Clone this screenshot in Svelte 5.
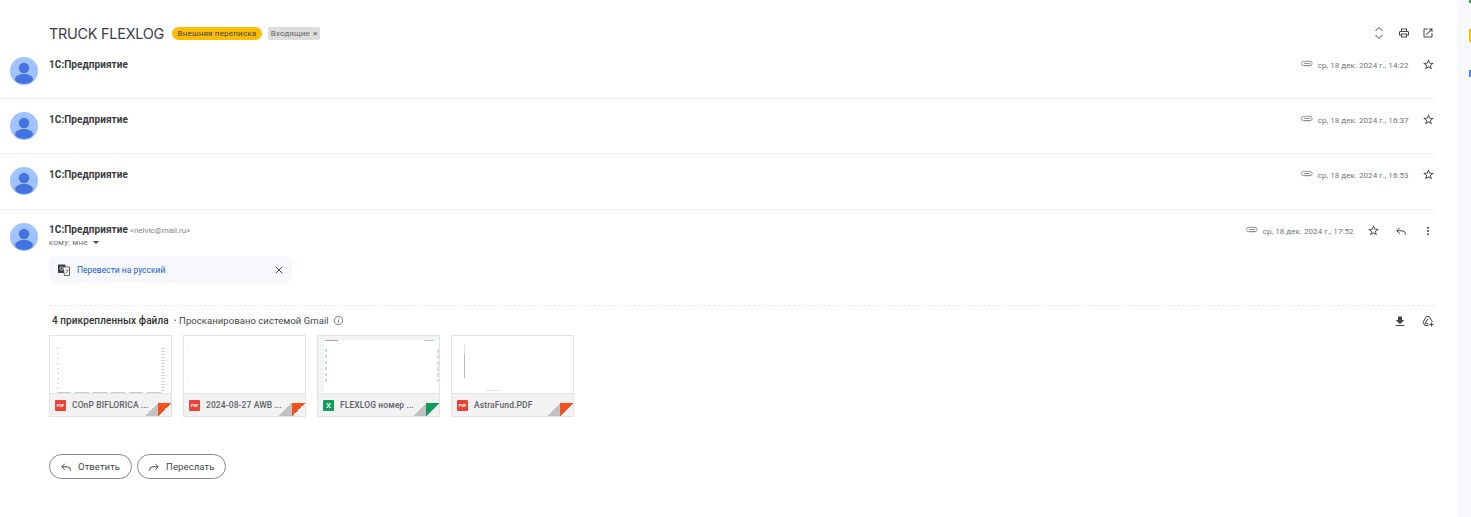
<script>
  const collapsed = [
    { time: 'ср, 18 дек. 2024 г., 14:22' },
    { time: 'ср, 18 дек. 2024 г., 16:37' },
    { time: 'ср, 18 дек. 2024 г., 16:53' }
  ];

  const files = [
    { name: 'COnP BIFLORICA ...', type: 'pdf', preview: 'a' },
    { name: '2024-08-27 AWB ...', type: 'pdf', preview: 'b' },
    { name: 'FLEXLOG номер ...', type: 'xls', preview: 'c' },
    { name: 'AstraFund.PDF', type: 'pdf', preview: 'd' }
  ];
</script>

{#snippet avatar()}
  <svg class="avatar" viewBox="0 0 28 28">
    <circle cx="14" cy="14" r="14" fill="#a0c3ff" />
    <circle cx="14" cy="11" r="5.2" fill="#4374e0" />
    <ellipse cx="14" cy="22" rx="9" ry="5" fill="#4374e0" />
  </svg>
{/snippet}

{#snippet clip()}
  <svg class="clip" viewBox="0 0 14 8" fill="none" stroke="#80868b" stroke-width="1">
    <path d="M4 6.5h6.5a2.5 2.5 0 0 0 0-5H3a2.5 2.5 0 0 0 0 5h8" />
    <path d="M3.5 4h7" />
  </svg>
{/snippet}

{#snippet star()}
  <svg class="ico star" viewBox="0 0 24 24" fill="#444746">
    <path d="M22 9.24l-7.19-.62L12 2 9.19 8.63 2 9.24l5.46 4.73L5.82 21 12 17.27 18.18 21l-1.63-7.03L22 9.24zM12 15.4l-3.76 2.27 1-4.28-3.32-2.88 4.38-.38L12 6.1l1.71 4.04 4.38.38-3.32 2.88 1 4.28L12 15.4z" />
  </svg>
{/snippet}

{#snippet reply()}
  <svg class="ico" viewBox="0 0 24 24" fill="none" stroke="#444746" stroke-width="2">
    <path d="M9.500 5.500L3.500 11.500l6 6" />
    <path d="M4 11.500h10a7 7 0 0 1 7 7v1" />
  </svg>
{/snippet}

{#snippet forward()}
  <svg class="ico" viewBox="0 0 24 24" fill="none" stroke="#444746" stroke-width="2">
    <path d="M14.500 5.500l6 6-6 6" />
    <path d="M20 11.500H10a7 7 0 0 0-7 7v1" />
  </svg>
{/snippet}

<div class="page">
  <main class="thread">
    <header class="subject">
      <h1>TRUCK FLEXLOG</h1>
      <span class="tag-yellow">Внешняя переписка</span>
      <span class="tag-gray">Входящие <span class="tag-x">×</span></span>
      <div class="subject-tools">
        <svg class="ico" viewBox="0 0 24 24" fill="none" stroke="#444746" stroke-width="2">
          <path d="M5 8l7-7 7 7" /><path d="M5 16l7 7 7-7" />
        </svg>
        <svg class="ico" viewBox="0 0 24 24" fill="#444746">
          <path d="M19 8h-1V3H6v5H5c-1.660 0-3 1.340-3 3v6h4v4h12v-4h4v-6c0-1.660-1.340-3-3-3zM8 5h8v3H8V5zm8 12v2H8v-4h8v2zm2-2v-2H6v2H4v-4c0-.55.45-1 1-1h14c.55 0 1 .45 1 1v4h-2z" />
        </svg>
        <svg class="ico" viewBox="0 0 24 24" fill="#444746">
          <path d="M19 19H5V5h7V3H5c-1.110 0-2 .9-2 2v14c0 1.100.89 2 2 2h14c1.100 0 2-.9 2-2v-7h-2v7zM14 3v2h3.590l-9.830 9.830 1.410 1.410L19 6.410V10h2V3h-7z" />
        </svg>
      </div>
    </header>

    {#each collapsed as msg}
      <section class="row">
        {@render avatar()}
        <div class="sender">1С:Предприятие</div>
        <div class="meta">
          {@render clip()}
          <span class="time">{msg.time}</span>
          {@render star()}
        </div>
      </section>
    {/each}

    <section class="open">
      <div class="open-head">
        {@render avatar()}
        <div class="who">
          <div class="who-line"><span class="sender">1С:Предприятие</span> <span class="email">&lt;nelvic@mail.ru&gt;</span></div>
          <div class="to">кому: мне <span class="caret"></span></div>
        </div>
        <div class="meta open-meta">
          {@render clip()}
          <span class="time">ср, 18 дек. 2024 г., 17:52</span>
          {@render star()}
          {@render reply()}
          <svg class="ico" viewBox="0 0 24 24" fill="#444746">
            <circle cx="12" cy="5.500" r="2" /><circle cx="12" cy="12" r="2" /><circle cx="12" cy="18.500" r="2" />
          </svg>
        </div>
      </div>

      <div class="translate">
        <svg class="trans-ico" viewBox="0 0 12 12">
          <rect x="0" y="0.500" width="7.500" height="8.500" rx="0.500" fill="#3c4043" />
          <path d="M5 3h6.500v8.500H6.500z" fill="#fff" stroke="#3c4043" stroke-width="0.800" />
          <path d="M7.500 6h3M8 9.500l2-3" stroke="#3c4043" stroke-width="0.700" fill="none" />
          <circle cx="3.600" cy="4.500" r="1.600" fill="none" stroke="#fff" stroke-width="0.700" />
        </svg>
        <a href="#top" class="trans-link">Перевести на русский</a>
        <svg class="trans-x" viewBox="0 0 10 10" fill="none" stroke="#444746" stroke-width="1.200">
          <path d="M1 1l8 8M9 1l-8 8" />
        </svg>
      </div>

      <div class="attachments">
        <div class="att-head">
          <strong>4 прикрепленных файла</strong>
          <span class="dot">•</span>
          <span class="scanned">Просканировано системой Gmail</span>
          <svg class="info" viewBox="0 0 12 12" fill="none" stroke="#5f6368" stroke-width="0.900">
            <circle cx="6" cy="6" r="4.500" /><path d="M6 5.500v3M6 3.500v1" />
          </svg>
          <div class="att-tools">
            <svg class="ico" viewBox="0 0 24 24" fill="#444746">
              <path d="M8 3h8v7h4.500L12 18.500 3.500 10H8z" /><path d="M3.500 20h17v2h-17z" />
            </svg>
            <svg class="ico" viewBox="0 0 24 24" fill="none" stroke="#444746" stroke-width="2">
              <path d="M8.500 3h6l6.500 11" /><path d="M8.500 3L2 14.500 5.500 21H13" /><path d="M11.500 8L6 17.500h7" />
              <path d="M19 15v8M15 19h8" />
            </svg>
          </div>
        </div>

        <div class="files">
          {#each files as f}
            <div class="file">
              <div class="thumb">
                {#if f.preview === 'a'}
                  <i class="ln v1"></i><i class="ln v2"></i><i class="ln h1"></i>
                {:else if f.preview === 'b'}
                  <i class="ln h2"></i><i class="ln h2b"></i><i class="ln v3"></i>
                {:else if f.preview === 'c'}
                  <i class="ln s1"></i><i class="ln s2"></i><i class="ln s3"></i><i class="ln s3b"></i><i class="ln s4"></i><i class="ln s5"></i>
                {:else}
                  <i class="ln v4"></i><i class="ln h3"></i>
                {/if}
              </div>
              <div class="foot">
                {#if f.type === 'pdf'}
                  <span class="badge pdf">PDF</span>
                {:else}
                  <span class="badge xls">X</span>
                {/if}
                <span class="fname">{f.name}</span>
                <span class="fold"></span>
                <span class="corner {f.type}"></span>
              </div>
            </div>
          {/each}
        </div>
      </div>

      <div class="actions">
        <button>{@render reply()}Ответить</button>
        <button>{@render forward()}Переслать</button>
      </div>
    </section>
  </main>

  <aside class="side">
    <i class="mark green"></i>
    <i class="mark yellow"></i>
    <i class="mark blue"></i>
  </aside>
</div>

<style>
  :global(body) {
    margin: 0;
    background: #fff;
  }

  .page {
    display: flex;
    height: 517px;
    overflow: hidden;
    font-family: Roboto, "Liberation Sans", sans-serif;
    color: #202124;
  }

  .thread {
    width: 1457px;
    flex: none;
  }

  .side {
    flex: 1;
    background: #f6f8fc;
    position: relative;
  }

  .mark {
    position: absolute;
    right: 0;
    width: 2px;
  }
  .mark.green { top: 0; height: 3px; background: #34a853; }
  .mark.yellow { top: 29px; height: 13px; background: #fbbc04; }
  .mark.blue { top: 70px; height: 7px; background: #4285f4; }

  .subject {
    height: 44px;
    box-sizing: border-box;
    padding: 24px 23px 0 49px;
    display: flex;
    align-items: flex-start;
    gap: 6px;
  }

  h1 {
    margin: 0 2px 0 0;
    font-family: Inter, sans-serif;
    font-size: 14.500px;
    font-weight: 400;
    line-height: 19px;
    color: #3c4043;
    letter-spacing: -0.300px;
  }

  .tag-yellow {
    margin-top: 3px;
    height: 13px;
    line-height: 13px;
    padding: 0 5.500px;
    border-radius: 7px;
    background: #fbbc04;
    font-size: 8px;
    color: #444;
    letter-spacing: 0.200px;
  }

  .tag-gray {
    margin-top: 3px;
    height: 13px;
    line-height: 13px;
    padding: 0 3px;
    border-radius: 2px;
    background: #dddddd;
    font-size: 8px;
    color: #666;
    letter-spacing: 0.150px;
  }

  .tag-x {
    margin-left: 1px;
    color: #555;
  }

  .subject-tools {
    margin-left: auto;
    margin-top: 3px;
    display: flex;
    gap: 12.500px;
  }

  .ico {
    width: 12px;
    height: 12px;
    flex: none;
    display: block;
  }

  .ico.star {
    width: 13px;
    height: 13px;
  }

  .row {
    height: 55px;
    box-sizing: border-box;
    margin-right: 22px;
    padding: 13px 0 0 10px;
    display: flex;
    align-items: flex-start;
    border-bottom: 1px solid #eceff1;
  }

  .row:nth-of-type(3) {
    height: 56px;
  }

  .row .sender {
    margin-left: 11px;
    margin-top: 2px;
  }

  .avatar {
    width: 28px;
    height: 28px;
    flex: none;
    display: block;
  }

  .sender {
    font-size: 10px;
    font-weight: 700;
    line-height: 12px;
    color: #3a3b3e;
    letter-spacing: 0.050px;
  }

  .meta {
    margin-left: auto;
    display: flex;
    align-items: center;
    margin-top: 1px;
  }

  .clip {
    width: 12px;
    height: 7px;
    margin: -3px 5px 0 0;
    flex: none;
  }

  .time {
    font-size: 8.100px;
    color: #6f7478;
    line-height: 12px;
    margin-right: 13.500px;
  }

  .open {
    padding-top: 13px;
  }

  .open-head {
    display: flex;
    margin-right: 22px;
    padding-left: 10px;
    align-items: flex-start;
  }

  .who {
    margin-left: 11px;
    padding-top: 1px;
  }

  .who-line {
    display: flex;
    align-items: baseline;
    gap: 2px;
    line-height: 12px;
  }

  .email {
    font-size: 8px;
    color: #80868b;
  }

  .to {
    font-size: 8px;
    color: #6f7478;
    line-height: 12px;
    letter-spacing: 0.150px;
  }

  .caret {
    display: inline-block;
    margin: 0 0 1px 3px;
    border: 3px solid transparent;
    border-top-color: #444746;
    border-bottom-width: 0;
  }

  .open-meta {
    padding-right: 1px;
  }
  .open-meta .ico + .ico {
    margin-left: 15px;
  }

  .translate {
    margin: 5px 0 0 49px;
    width: 243px;
    height: 27px;
    box-sizing: border-box;
    background: #f6f8fc;
    border-radius: 6px;
    display: flex;
    align-items: center;
    padding: 0 9px;
  }

  .trans-ico {
    width: 12px;
    height: 12px;
    flex: none;
  }

  .trans-link {
    margin-left: 7px;
    font-size: 8.500px;
    color: #1a5fd0;
    text-decoration: none;
  }

  .trans-x {
    width: 8px;
    height: 8px;
    margin-left: auto;
  }

  .attachments {
    margin: 22px 22px 0 49px;
    border-top: 1px dashed #e8eaed;
    padding-top: 8px;
  }

  .att-head {
    display: flex;
    align-items: center;
    height: 13px;
    padding-left: 3px;
    font-size: 9.500px;
    color: #444746;
    gap: 3px;
  }

  .att-head strong {
    font-weight: 500;
    font-size: 10px;
    letter-spacing: 0.080px;
    color: #303134;
    margin-right: 2px;
  }

  .scanned {
    letter-spacing: 0.060px;
  }

  .dot {
    font-size: 7px;
  }

  .info {
    width: 11px;
    height: 11px;
    margin-left: 1px;
  }

  .att-tools {
    margin-left: auto;
    padding-right: 1px;
    display: flex;
    gap: 16px;
  }

  .files {
    display: flex;
    gap: 11px;
    margin-top: 8px;
  }

  .file {
    width: 123px;
    height: 82px;
    box-sizing: border-box;
    border: 1px solid #e3e3e3;
    display: flex;
    flex-direction: column;
    background: #fff;
  }

  .thumb {
    flex: 1;
    position: relative;
    overflow: hidden;
  }

  .ln {
    position: absolute;
    display: block;
  }

  .v1 { left: 7px; top: 12px; width: 2px; height: 45px; background: repeating-linear-gradient(#d5d7da 0 1px, #fff 1px 5px); }
  .v2 { right: 6px; top: 12px; width: 4px; height: 45px; background: repeating-linear-gradient(#d2d4d7 0 1px, #fff 1px 3px); }
  .h1 { left: 7px; right: 6px; top: 56px; height: 1px; background: repeating-linear-gradient(90deg, #c9ccd0 0 14px, #fff 14px 18px); }
  .h2 { left: 3px; width: 8px; top: 57px; height: 1px; background: #c9ccd0; }
  .h2b { left: 38px; width: 26px; top: 57px; height: 1px; background: #d5d7da; }
  .v3 { left: 3px; top: 9px; width: 1px; height: 35px; background: repeating-linear-gradient(#eceff1 0 4px, #fff 4px 32px); }
  .s1 { left: 0; right: 0; top: 0; height: 4px; background: #f3f4f4; }
  .s2 { left: 0; top: 0; width: 6px; height: 56px; background: repeating-linear-gradient(#f0f1f1 0 3px, #fafafa 3px 4px); }
  .s3 { left: 7px; top: 4px; width: 13px; height: 1px; background: #a5a8ab; }
  .s3b { right: 5px; top: 4px; width: 10px; height: 1px; background: #c5c8ca; }
  .s4 { left: 7px; top: 13px; width: 2px; height: 33px; background: repeating-linear-gradient(#c4e0c4 0 3px, #fff 3px 6px); }
  .s5 { right: 0; top: 13px; width: 2px; height: 33px; background: repeating-linear-gradient(#cfe8cf 0 4px, #fff 4px 6px); }
  .v4 { left: 12px; top: 8px; width: 1px; height: 34px; background: linear-gradient(#dfe1e3 0 30%, #b6babd 30%); }
  .h3 { left: 34px; width: 13px; top: 54px; height: 1px; background: #dfe1e3; }

  .foot {
    height: 22px;
    flex: none;
    background: #f2f2f2;
    border-top: 1px solid #e3e3e3;
    display: flex;
    align-items: center;
    padding-left: 5px;
    position: relative;
  }

  .badge {
    width: 11px;
    height: 11px;
    border-radius: 1px;
    flex: none;
    color: #fff;
    text-align: center;
    line-height: 11px;
  }

  .badge.pdf {
    background: #ea4335;
    font-size: 4px;
    font-weight: 700;
  }

  .badge.xls {
    background: #0f9d58;
    font-size: 8px;
    font-weight: 500;
  }

  .fname {
    margin-left: 6px;
    font-size: 8.500px;
    font-weight: 500;
    color: #5f6368;
    letter-spacing: 0.100px;
    white-space: nowrap;
  }

  .fold {
    position: absolute;
    right: 13px;
    bottom: 0;
    width: 13px;
    height: 13px;
    background: linear-gradient(135deg, transparent 50%, #c1c1c1 50%);
  }

  .corner {
    position: absolute;
    right: 0;
    bottom: 0;
    width: 13px;
    height: 13px;
  }
  .corner.pdf { background: linear-gradient(135deg, #f4511e 50%, transparent 50%); }
  .corner.xls { background: linear-gradient(135deg, #0f9d58 50%, transparent 50%); }

  .actions {
    display: flex;
    gap: 5px;
    margin: 37px 0 0 49px;
  }

  button {
    height: 25px;
    box-sizing: border-box;
    background: #fff;
    border: 1px solid #858886;
    border-radius: 13px;
    padding: 0 11px 0 10px;
    display: flex;
    align-items: center;
    gap: 6px;
    font-family: Roboto, sans-serif;
    font-size: 9.500px;
    color: #444746;
    letter-spacing: 0.100px;
  }
</style>
